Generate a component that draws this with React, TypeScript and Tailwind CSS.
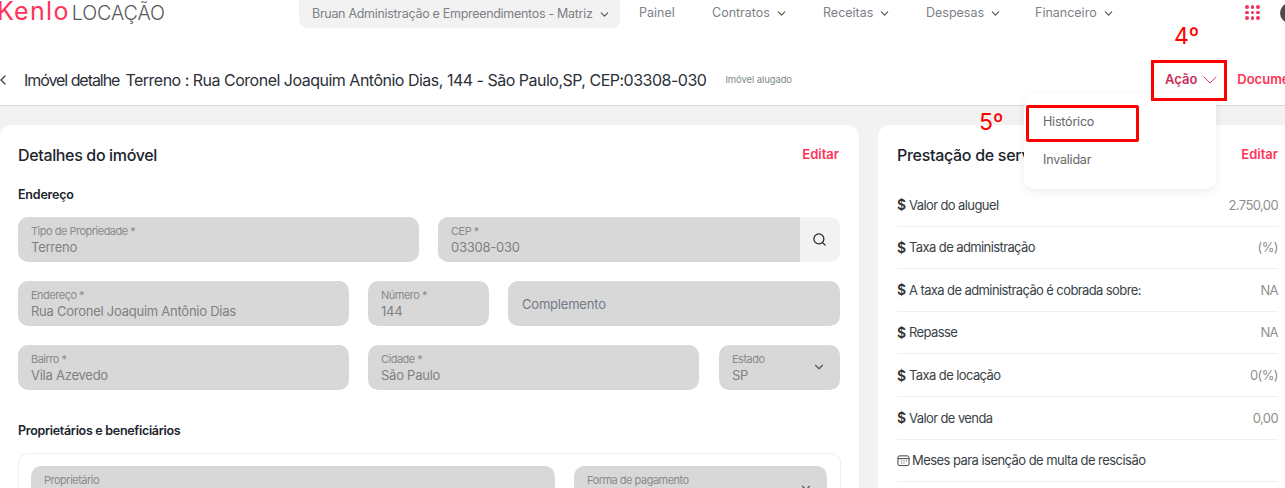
import React from "react";
import { ChevronDown, ChevronLeft, Search } from "lucide-react";

const NAV_ITEMS = [
  { label: "Contratos", width: "w-[111px]" },
  { label: "Receitas", width: "w-[103px]" },
  { label: "Despesas", width: "w-[109px]" },
  { label: "Financeiro", width: "w-[100px]" },
];

const SERVICE_ROWS = [
  { label: "Valor do aluguel", value: "2.750,00" },
  { label: "Taxa de administração", value: "(%)" },
  { label: "A taxa de administração é cobrada sobre:", value: "NA" },
  { label: "Repasse", value: "NA" },
  { label: "Taxa de locação", value: "0(%)" },
  { label: "Valor de venda", value: "0,00" },
];

function Field({
  label,
  value,
  className = "",
  chevron,
}: {
  label: string;
  value: string;
  className?: string;
  chevron?: boolean;
}) {
  return (
    <div
      className={`relative h-[45px] shrink-0 rounded-[10px] bg-[#d8d8d8] pl-[13px] pt-[7px] ${className}`}
    >
      <div className="text-[11px] leading-[15px] tracking-[-0.5px] text-[#8a8a8a]">{label}</div>
      <div className="text-[13px] leading-[17px] tracking-[-0.25px] text-[#808080]">{value}</div>
      {chevron && (
        <ChevronDown className="absolute right-[14px] top-[15px] h-[14px] w-[14px] text-[#555]" />
      )}
    </div>
  );
}

function ServiceRow({ label, value }: { label: string; value: string }) {
  return (
    <div className="flex h-[42.6px] items-center justify-between border-b border-[#efefef] pt-[1px] text-[13px] tracking-[-0.6px]">
      <div className="flex items-center text-[#3a3f47]">
        <span className="w-[12px] text-[14px] font-semibold leading-none text-[#333]">$</span>
        <span>{label}</span>
      </div>
      <span className="tracking-[-0.6px] text-[#8f8f8f]">{value}</span>
    </div>
  );
}

export default function App() {
  return (
    <div
      className="relative h-[488px] w-[1285px] overflow-hidden bg-[#f2f2f2]"
      style={{ fontFamily: '"Inter", "Noto Sans", sans-serif' }}
    >
      {/* top nav */}
      <div className="h-[106px] border-b border-[#d9d9d9] bg-white">
        <div className="flex h-[28px] items-start">
          <div className="-ml-[3px] flex w-[302px] shrink-0 items-baseline">
            <span className="text-[25px] font-normal leading-[22px] tracking-[1.3px] text-[#ff3358]">
              Kenlo
            </span>
            <span className="ml-[2px] text-[19.7px] font-light leading-[22px] tracking-[-0.1px] text-[#55585c]">
              LOCAÇÃO
            </span>
          </div>
          <div className="flex h-[28px] w-[321px] shrink-0 items-center rounded-b-[8px] bg-[#f2f2f2] pl-[13px] text-[12.5px] tracking-[-0.3px] text-[#7d8085]">
            Bruan Administração e Empreendimentos - Matriz
            <ChevronDown className="ml-[5px] h-[13px] w-[13px] text-[#555]" />
          </div>
          <div className="flex h-[27px] w-[92px] shrink-0 items-center pl-[19px] text-[12.5px] text-[#7d8085]">
            Painel
          </div>
          {NAV_ITEMS.map((item) => (
            <div
              key={item.label}
              className={`flex h-[27px] shrink-0 items-center text-[12.5px] text-[#7d8085] ${item.width}`}
            >
              {item.label}
              <ChevronDown className="ml-[5px] h-[13px] w-[13px] text-[#555]" />
            </div>
          ))}
          <div className="ml-[110px] mt-[5px] grid h-[15px] w-[15px] shrink-0 grid-cols-3 gap-[2px]">
            {Array.from({ length: 9 }).map((_, i) => (
              <span key={i} className="h-[3.5px] w-[3.5px] rounded-full bg-[#f0345a]" />
            ))}
          </div>
          <div className="ml-[20px] mt-[3px] h-[20px] w-[20px] shrink-0 rounded-full bg-[#4a4a4a]" />
        </div>

        {/* page title */}
        <div className="flex h-[77px] items-center pt-[27px]">
          <ChevronLeft className="-ml-[5px] h-[16px] w-[16px] text-[#444]" />
          <h1 className="ml-[13px] flex whitespace-pre text-[16px] tracking-[-0.5px] text-[#2c3038]">
            <span className="mr-[6px] tracking-[-1.05px]">Imóvel detalhe</span>
            <span>Terreno : Rua Coronel Joaquim Antônio Dias, 144 - São Paulo,SP, CEP:03308-030</span>
          </h1>
          <span className="ml-[19px] text-[9.5px] tracking-[-0.1px] text-[#7c8c7c]">Imóvel alugado</span>
          <div className="ml-auto flex items-center whitespace-nowrap">
            <span className="text-[13px] font-semibold text-[#c8305a]">Ação</span>
            <ChevronDown strokeWidth={1} className="ml-[1px] h-[24px] w-[24px] text-[#d9486a]" />
            <span className="ml-[15px] -mr-[32px] text-[13px] font-semibold text-[#ff3358]">Documentos</span>
          </div>
        </div>
      </div>

      {/* content */}
      <div className="flex gap-[19px] pt-[19px]">
        <div className="h-[400px] w-[859px] shrink-0 rounded-[12px] bg-white px-[18px] pt-[20px]">
          <div className="flex items-center justify-between">
            <h2 className="text-[16px] font-medium leading-[20px] tracking-[-0.35px] text-[#20242c]">
              Detalhes do imóvel
            </h2>
            <span className="mr-[2px] text-[13px] font-semibold text-[#ff3358]">Editar</span>
          </div>
          <h3 className="mt-[21px] text-[12.5px] font-semibold leading-[18px] tracking-[-0.2px] text-[#20242c]">
            Endereço
          </h3>
          <div className="mt-[13px] flex flex-col gap-[19px]">
            <div className="flex gap-[19px]">
              <Field label="Tipo de Propriedade *" value="Terreno" className="w-[401px]" />
              <div className="flex h-[45px] w-[402px] shrink-0 overflow-hidden rounded-[10px] bg-[#f2f2f2]">
                <Field label="CEP *" value="03308-030" className="w-[362px] rounded-none" />
                <div className="flex flex-1 items-center justify-center pr-[1px]">
                  <Search strokeWidth={2} className="h-[15px] w-[15px] text-[#222]" />
                </div>
              </div>
            </div>
            <div className="flex gap-[19px]">
              <Field label="Endereço *" value="Rua Coronel Joaquim Antônio Dias" className="w-[331px]" />
              <Field label="Número *" value="144" className="w-[121px]" />
              <div className="flex h-[45px] w-[332px] shrink-0 items-center rounded-[10px] bg-[#d8d8d8] pl-[14px] pt-[2px] text-[13px] tracking-[-0.2px] text-[#737a85]">
                Complemento
              </div>
            </div>
            <div className="flex gap-[19px]">
              <Field label="Bairro *" value="Vila Azevedo" className="w-[331px]" />
              <Field label="Cidade *" value="São Paulo" className="w-[331px]" />
              <Field label="Estado" value="SP" chevron className="ml-[1px] w-[121px]" />
            </div>
          </div>
          <h3 className="mt-[32px] text-[12.5px] font-semibold leading-[18px] tracking-[-0.3px] text-[#20242c]">
            Proprietários e beneficiários
          </h3>
          <div className="mt-[13px] flex h-[80px] gap-[19px] rounded-[10px] border border-[#efefef] px-[12px] pt-[12px]">
            <Field label="Proprietário" value="" className="w-[524px]" />
            <Field label="Forma de pagamento" value="" chevron className="w-[253px]" />
          </div>
        </div>

        <div className="h-[400px] w-[420px] shrink-0 rounded-[12px] bg-white pl-[19px] pr-[13px] pt-[20px]">
          <div className="flex items-center justify-between pb-[19px]">
            <h2 className="text-[16px] font-medium leading-[20px] tracking-[-0.3px] text-[#20242c]">
              Prestação de serviços
            </h2>
            <span className="mr-[7px] text-[13px] font-semibold text-[#ff3358]">Editar</span>
          </div>
          <div className="mr-[7px]">
            {SERVICE_ROWS.map((row) => (
              <ServiceRow key={row.label} label={row.label} value={row.value} />
            ))}
            <div className="flex h-[42.6px] items-center border-b border-[#efefef] text-[13px] tracking-[-0.55px] text-[#3a3f47]">
              <svg viewBox="0 0 14 14" className="mr-[2px] h-[13px] w-[13px]" fill="none" stroke="#333" strokeWidth="1">
                <rect x="1" y="2" width="12" height="10.5" rx="2" />
                <path d="M1 5h12M4.5 7.5h1M7 7.5h1M9.5 7.5h1M4.5 9.8h1M7 9.8h1" />
              </svg>
              Meses para isenção de multa de rescisão
            </div>
          </div>
        </div>
      </div>

      {/* action menu */}
      <div className="absolute left-[1024px] top-[93px] flex h-[96px] w-[192px] flex-col rounded-[10px] bg-white pl-[19px] pt-[20px] text-[12.5px] tracking-[-0.2px] text-[#666] shadow-[0_2px_10px_rgba(0,0,0,0.08)]">
        <span className="leading-[18px]">Histórico</span>
        <span className="mt-[20px] leading-[18px]">Invalidar</span>
      </div>

      {/* tutorial marks */}
      <div className="absolute left-[1151px] top-[60px] h-[41px] w-[76px] border-[3px] border-[#ff0000]" />
      <div className="absolute left-[1026px] top-[105px] h-[37px] w-[113px] rounded-[2px] border-[3px] border-[#ff0000]" />
      <span className="absolute left-[1174px] top-[21px] text-[23px] leading-[30px] text-[#ff0000]">4º</span>
      <span className="absolute left-[979px] top-[107px] text-[23px] leading-[30px] text-[#ff0000]">5º</span>
    </div>
  );
}
